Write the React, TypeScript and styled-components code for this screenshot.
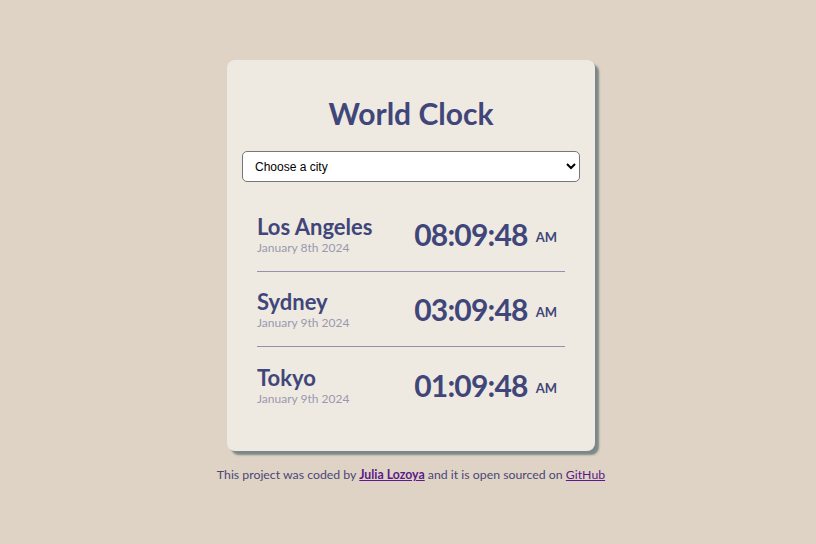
import React from "react";
import styled, { createGlobalStyle } from "styled-components";

const Global = createGlobalStyle`
  html, body { margin: 0; padding: 0; }
  body {
    background: #ded3c4;
    font-family: Lato, "Noto Sans", sans-serif;
  }
`;

const Page = styled.div`
  display: flex;
  flex-direction: column;
  align-items: center;
  padding: 60px 0 0 6px;
`;

const Card = styled.div`
  width: 368px;
  box-sizing: border-box;
  background: #efeae1;
  border-radius: 8px;
  box-shadow: 4px 4px 2px #7c8888;
  padding: 33px 15px 29px 15px;
`;

const Title = styled.h1`
  margin: 0 0 18px 0;
  text-align: center;
  color: #40467a;
  font-size: 30px;
  font-weight: 700;
  line-height: 40px;
`;

const Select = styled.select`
  width: 100%;
  height: 31px;
  border: 1px solid #767676;
  border-radius: 5px;
  background: #fff;
  font-family: "Liberation Sans", Arial, sans-serif;
  font-size: 12px;
  color: #000;
  padding: 0 8px;
`;

const List = styled.div`
  padding: 15px 15px 0 15px;
`;

const Row = styled.div<{ $last?: boolean }>`
  display: flex;
  justify-content: space-between;
  align-items: center;
  height: 75px;
  box-sizing: border-box;
  padding: 0 8px 0 0;
  border-bottom: ${(p) => (p.$last ? "none" : "1px solid #9391ad")};
`;

const CityBlock = styled.div`
  display: flex;
  flex-direction: column;
`;

const City = styled.div`
  color: #40467a;
  font-size: 22px;
  font-weight: 700;
  line-height: 28px;
`;

const DateText = styled.div`
  color: #9a98b0;
  font-size: 12px;
  line-height: 14px;
`;

const Time = styled.div`
  color: #40467a;
  font-size: 30px;
  letter-spacing: -0.8px;
  font-weight: 700;
  display: flex;
  align-items: center;
  gap: 8px;
`;

const Ampm = styled.span`
  font-size: 13px;
  letter-spacing: 0;
  font-weight: 700;
  margin-top: 6px;
`;

const Footer = styled.p`
  margin: 16px 0 0 0;
  font-size: 12.3px;
  color: #4b4778;
  text-align: center;
  a { color: #5b1a8b; }
`;

const cities = [
  { name: "Los Angeles", date: "January 8th 2024", time: "08:09:48" },
  { name: "Sydney", date: "January 9th 2024", time: "03:09:48" },
  { name: "Tokyo", date: "January 9th 2024", time: "01:09:48" },
];

export default function App() {
  return (
    <>
      <Global />
      <Page>
        <Card>
          <Title>World Clock</Title>
          <Select defaultValue="">
            <option value="">Choose a city</option>
            <option value="current">My current location</option>
            <option value="paris">Paris</option>
          </Select>
          <List>
            {cities.map((c, i) => (
              <Row key={c.name} $last={i === cities.length - 1}>
                <CityBlock>
                  <City>{c.name}</City>
                  <DateText>{c.date}</DateText>
                </CityBlock>
                <Time>
                  {c.time}
                  <Ampm>AM</Ampm>
                </Time>
              </Row>
            ))}
          </List>
        </Card>
        <Footer>
          This project was coded by <a href="#"><strong>Julia Lozoya</strong></a> and it is open sourced on <a href="#">GitHub</a>
        </Footer>
      </Page>
    </>
  );
}
